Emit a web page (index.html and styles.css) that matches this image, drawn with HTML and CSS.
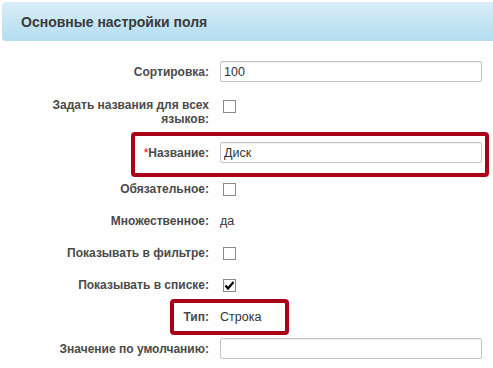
FILE: index.html
```html
<!DOCTYPE html>
<html lang="ru">
<head>
    <meta charset="UTF-8">
    <title>Основные настройки поля</title>
    <link rel="stylesheet" href="styles.css">
</head>
<body>
    <div class="heading">Основные настройки поля</div>
    <div class="form">
        <div class="row">
            <div class="label">Сортировка:</div>
            <div class="value"><input type="text" class="field" value="100"></div>
        </div>
        <div class="row row-top">
            <div class="label">Задать названия для всех языков:</div>
            <div class="value"><span class="check"></span></div>
        </div>
        <div class="row mark mark-name">
            <div class="label"><span class="req">*</span>Название:</div>
            <div class="value"><input type="text" class="field" value="Диск"></div>
        </div>
        <div class="row">
            <div class="label">Обязательное:</div>
            <div class="value"><span class="check"></span></div>
        </div>
        <div class="row">
            <div class="label">Множественное:</div>
            <div class="value text">да</div>
        </div>
        <div class="row">
            <div class="label">Показывать в фильтре:</div>
            <div class="value"><span class="check"></span></div>
        </div>
        <div class="row">
            <div class="label">Показывать в списке:</div>
            <div class="value">
                <span class="check">
                    <svg width="11" height="11" viewBox="0 0 11 11"><path d="M1.5 5.5 L4 8.5 L9.5 2" fill="none" stroke="#000" stroke-width="2.2"/></svg>
                </span>
            </div>
        </div>
        <div class="row mark mark-type">
            <div class="label">Тип:</div>
            <div class="value text">Строка</div>
        </div>
        <div class="row row-last">
            <div class="label">Значение по умолчанию:</div>
            <div class="value"><input type="text" class="field" value=""></div>
        </div>
    </div>
</body>
</html>
```

FILE: styles.css
```css
body {
    margin: 0;
    background: #fff;
    font-family: "Liberation Sans", Arial, sans-serif;
    font-size: 12px;
    color: #333;
}
.heading {
    margin: 2px 0 0 2px;
    height: 39px;
    line-height: 40px;
    padding-left: 19px;
    border-radius: 4px 0 0 4px;
    background: linear-gradient(to bottom, #d9eff8, #b3ddef);
    font-size: 14px;
    font-weight: bold;
    color: #3a3a3a;
}
.form {
    display: flex;
    flex-direction: column;
    gap: 16px;
    padding-top: 20px;
}
.row {
    display: grid;
    grid-template-columns: 209px 262px;
    column-gap: 11px;
    align-items: center;
    position: relative;
}
.row-top {
    align-items: start;
}
.mark-name {
    margin-bottom: 2px;
}
.row-last {
    margin-top: -3px;
}
.label {
    padding-left: 45px;
    text-align: right;
    font-size: 12px;
    font-weight: bold;
    color: #4a4a4a;
    line-height: 14px;
}
.value {
    display: flex;
    align-items: center;
    min-height: 16px;
}
.text {
    color: #333;
    font-size: 12.5px;
}
.req {
    color: #e00;
    font-weight: normal;
}
.field {
    box-sizing: border-box;
    width: 262px;
    height: 21px;
    margin: 0;
    padding: 0 3px;
    border: 1px solid #c4c4c4;
    border-radius: 2px;
    box-shadow: inset 0 1px 1px rgba(0, 0, 0, 0.06);
    font-family: "Liberation Sans", Arial, sans-serif;
    font-size: 12.5px;
    color: #333;
}
.check {
    box-sizing: border-box;
    width: 13px;
    height: 13px;
    margin-left: 3px;
    border: 1px solid #8a8a8a;
    background: #fff;
    display: flex;
    align-items: center;
    justify-content: center;
}
.mark::after {
    content: "";
    position: absolute;
    border: 4px solid #a90018;
    border-radius: 4px;
    box-sizing: border-box;
}
.mark-name::after {
    left: 131px;
    width: 358px;
    top: -10px;
    bottom: -14px;
}
.mark-type::after {
    left: 170px;
    width: 119px;
    top: -10px;
    bottom: -10px;
}
```
